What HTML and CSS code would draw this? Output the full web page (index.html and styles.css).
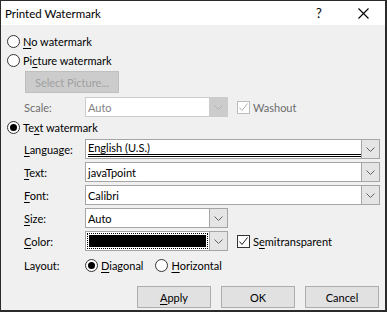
FILE: index.html
```html
<!DOCTYPE html>
<html>
<head>
<meta charset="utf-8">
<link rel="stylesheet" href="styles.css">
</head>
<body>
<div class="win">
  <div class="titlebar">
    <span class="title">Printed Watermark</span>
    <span class="help">?</span>
    <span class="close"><svg width="11" height="11" viewBox="0 0 11 11"><path d="M0.5 0.5L10.5 10.5M10.5 0.5L0.5 10.5" stroke="#000" stroke-width="1.1" fill="none"/></svg></span>
  </div>
  <div class="body">
    <div class="row rad r1"><span class="radio"></span><span class="lbl"><u>N</u>o watermark</span></div>
    <div class="row rad r2"><span class="radio"></span><span class="lbl">Pi<u>c</u>ture watermark</span></div>
    <div class="row r3"><span class="btn-disabled">Select Picture...</span></div>
    <div class="row field r4">
      <span class="flabel disabled">Scale:</span>
      <span class="combo short dis"><span class="ctext">Auto</span><span class="carrow"><svg width="9" height="5" viewBox="0 0 9 5"><path d="M0.5 0.5L4.5 4.5L8.5 0.5" stroke="#b4b4b4" fill="none"/></svg></span></span>
      <span class="check dis"><svg width="11" height="11" viewBox="0 0 11 11"><path d="M1.5 5.5L4 8.5L9.5 1.5" stroke="#b4b4b4" fill="none" stroke-width="1"/></svg></span>
      <span class="clabel disabled">Washout</span>
    </div>
    <div class="row rad r5"><span class="radio on"></span><span class="lbl">Te<u>x</u>t watermark</span></div>
    <div class="row field r6">
      <span class="flabel"><u>L</u>anguage:</span>
      <span class="combo long"><span class="ctext lang"><span class="dbl">English (U.S.)</span></span><span class="carrow"><svg width="9" height="5" viewBox="0 0 9 5"><path d="M0.5 0.5L4.5 4.5L8.5 0.5" stroke="#606060" fill="none"/></svg></span></span>
    </div>
    <div class="row field r7">
      <span class="flabel"><u>T</u>ext:</span>
      <span class="combo long"><span class="ctext">javaTpoint</span><span class="carrow"><svg width="9" height="5" viewBox="0 0 9 5"><path d="M0.5 0.5L4.5 4.5L8.5 0.5" stroke="#606060" fill="none"/></svg></span></span>
    </div>
    <div class="row field r8">
      <span class="flabel"><u>F</u>ont:</span>
      <span class="combo long"><span class="ctext">Calibri</span><span class="carrow"><svg width="9" height="5" viewBox="0 0 9 5"><path d="M0.5 0.5L4.5 4.5L8.5 0.5" stroke="#606060" fill="none"/></svg></span></span>
    </div>
    <div class="row field r9">
      <span class="flabel"><u>S</u>ize:</span>
      <span class="combo short"><span class="ctext">Auto</span><span class="carrow"><svg width="9" height="5" viewBox="0 0 9 5"><path d="M0.5 0.5L4.5 4.5L8.5 0.5" stroke="#606060" fill="none"/></svg></span></span>
    </div>
    <div class="row field r10">
      <span class="flabel"><u>C</u>olor:</span>
      <span class="combo short"><span class="ctext colorbox"><span class="focus"><span class="swatch"></span></span></span><span class="carrow"><svg width="9" height="5" viewBox="0 0 9 5"><path d="M0.5 0.5L4.5 4.5L8.5 0.5" stroke="#606060" fill="none"/></svg></span></span>
      <span class="check"><svg width="11" height="11" viewBox="0 0 11 11"><path d="M1.5 5.5L4 8.5L9.5 1.5" stroke="#222" fill="none" stroke-width="1"/></svg></span>
      <span class="clabel">S<u>e</u>mitransparent</span>
    </div>
    <div class="row field r11">
      <span class="flabel">Layout:</span>
      <span class="radio on"></span><span class="lbl"><u>D</u>iagonal</span>
      <span class="radio h"></span><span class="lbl"><u>H</u>orizontal</span>
    </div>
    <div class="row buttons">
      <span class="btn"><u>A</u>pply</span>
      <span class="btn">OK</span>
      <span class="btn">Cancel</span>
    </div>
  </div>
</div>
</body>
</html>
```
FILE: styles.css
```css
html, body {
  margin: 0;
  padding: 0;
}
body {
  font-family: Lato, "Liberation Sans", sans-serif;
  font-size: 11px;
  color: #000;
  background: #fff;
}
u { text-decoration: underline; text-underline-offset: 2px; text-decoration-thickness: 1px; }
.win {
  width: 387px;
  height: 312px;
  box-sizing: border-box;
  border-style: solid;
  border-color: #2b2b2b;
  border-width: 1px 2px 2px 1px;
  display: flex;
  flex-direction: column;
  background: #f0f0f0;
}
.titlebar {
  height: 24px;
  background: #fff;
  display: flex;
  align-items: center;
  flex-shrink: 0;
  font-size: 11.5px;
}
.title {
  padding-left: 4px;
  flex: 1;
}
.help {
  width: 12px;
  margin-right: 30px;
  font-size: 13px;
}
.close {
  width: 27px;
  display: flex;
  align-items: center;
  height: 24px;
  padding-top: 1px;
}
.body {
  flex: 1;
  display: flex;
  flex-direction: column;
  padding-left: 6px;
  padding-right: 5px;
}
.row {
  display: flex;
  align-items: center;
  flex-shrink: 0;
}
.rad { height: 15px; }
.r1 { margin-top: 9px; }
.r2 { margin-top: 4px; }
.r3 { margin-top: 3px; }
.r4 { margin-top: 4px; }
.r5 { margin-top: 3px; }
.r6 { margin-top: 4px; }
.r7, .r8, .r9, .r10 { margin-top: 3px; }
.r11 { margin-top: 4px; height: 15px; }
.radio {
  width: 13px;
  height: 13px;
  box-sizing: border-box;
  border: 1px solid #333;
  border-radius: 50%;
  background: #fff;
  flex-shrink: 0;
  display: flex;
  align-items: center;
  justify-content: center;
}
.radio.on::after {
  content: "";
  width: 7px;
  height: 7px;
  border-radius: 50%;
  background: #000;
}
.lbl { margin-left: 3px; }
.btn-disabled {
  margin-left: 18px;
  width: 94px;
  height: 22px;
  box-sizing: border-box;
  background: #cccccc;
  border: 1px solid #bfbfbf;
  color: #a0a0a0;
  display: flex;
  align-items: center;
  justify-content: center;
}
.field { height: 20px; }
.flabel {
  margin-left: 17px;
  width: 61px;
  flex-shrink: 0;
}
.disabled { color: #6d6d6d; }
.combo {
  height: 20px;
  box-sizing: border-box;
  border: 1px solid #a5a5a5;
  background: #fff;
  display: flex;
  flex-shrink: 0;
}
.combo.long { width: 295px; }
.combo.short { width: 143px; }
.ctext {
  flex: 1;
  padding-left: 2px;
  display: flex;
  align-items: center;
  position: relative;
}
.combo.dis { border-color: #cccccc; }
.combo.dis .ctext { color: #838383; }
.carrow {
  width: 18px;
  box-sizing: border-box;
  border-left: 1px solid #a5a5a5;
  background: #e5e5e5;
  display: flex;
  align-items: center;
  justify-content: center;
}
.combo.dis .carrow { background: #cccccc; border-left-color: #cccccc; }
.lang { align-items: flex-start; }
.dbl {
  display: block;
  width: 100%;
  height: 13px;
  margin-top: 1px;
  border-bottom: 3px double #000;
  line-height: 13px;
}
.colorbox { padding: 1px; align-items: stretch; }
.focus {
  flex: 1;
  border: 1px dotted #000;
  padding: 1px;
  display: flex;
}
.swatch { flex: 1; background: #000; }
.check {
  margin-left: 9px;
  width: 13px;
  height: 13px;
  box-sizing: border-box;
  border: 1px solid #333;
  background: #fff;
  display: flex;
  align-items: center;
  justify-content: center;
}
.check.dis { border-color: #bcbcbc; }
.clabel { margin-left: 3px; }
.radio.h { margin-left: 12px; }
.buttons {
  margin-top: 11px;
  justify-content: flex-end;
  gap: 10px;
  padding-right: 1px;
}
.btn {
  width: 74px;
  height: 22px;
  box-sizing: border-box;
  background: #e1e1e1;
  border: 1px solid #adadad;
  display: flex;
  align-items: center;
  justify-content: center;
}
```
